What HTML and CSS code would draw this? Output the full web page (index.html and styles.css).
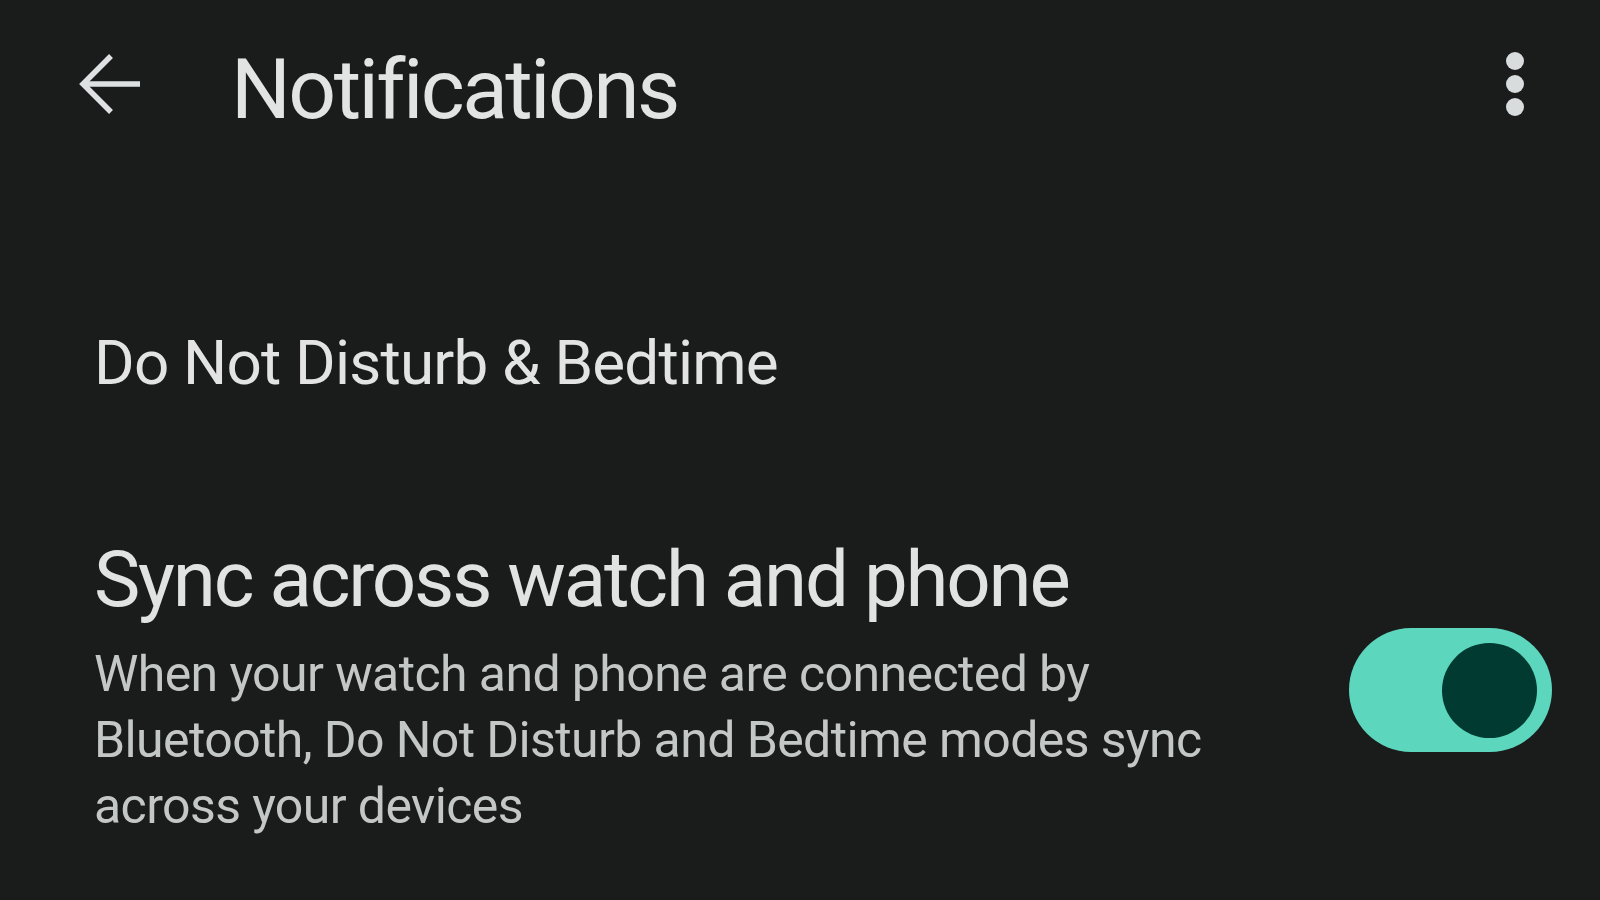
FILE: index.html
```html
<!DOCTYPE html>
<html lang="en">
<head>
<meta charset="utf-8">
<title>Notifications</title>
<link rel="stylesheet" href="styles.css">
</head>
<body>
<div class="screen">
  <header class="appbar">
    <button class="icon-btn back" aria-label="Back">
      <svg width="64" height="64" viewBox="0 0 64 64" aria-hidden="true">
        <path d="M61 32H6" stroke="currentColor" stroke-width="5.5" fill="none"/>
        <path d="M32 4L4 32L32 60" stroke="currentColor" stroke-width="5.5" fill="none" stroke-linejoin="miter"/>
      </svg>
    </button>
    <h1 class="title">Notifications</h1>
    <div class="spacer"></div>
    <button class="icon-btn more" aria-label="More options">
      <span class="dot"></span><span class="dot"></span><span class="dot"></span>
    </button>
  </header>
  <main class="list">
    <div class="item item-link">Do Not Disturb &amp; Bedtime</div>
    <div class="item item-switch">
      <div class="texts">
        <div class="item-title">Sync across watch and phone</div>
        <div class="item-summary">When your watch and phone are connected by Bluetooth, Do Not Disturb and Bedtime modes sync across your devices</div>
      </div>
      <div class="switch on" role="switch" aria-checked="true"><span class="thumb"></span></div>
    </div>
  </main>
</div>
</body>
</html>
```
FILE: styles.css
```css
html, body {
  margin: 0;
  padding: 0;
  background: #1a1c1c;
}
body {
  font-family: Roboto, "Noto Sans", "Liberation Sans", sans-serif;
  color: #e2e3e3;
}
.screen {
  width: 1600px;
  height: 900px;
  overflow: hidden;
  background: #1a1c1c;
}
.appbar {
  display: flex;
  align-items: center;
  height: 168px;
  padding: 0 76px 0 79px;
  box-sizing: border-box;
}
.icon-btn {
  background: none;
  border: 0;
  padding: 0;
  color: #dde1e1;
  display: flex;
  align-items: center;
  justify-content: center;
}
.back {
  width: 64px;
  height: 64px;
}
.back svg { display: block; }
.title {
  margin: 12px 0 0 88px;
  font-size: 84px;
  font-weight: 400;
  line-height: 1;
  color: #e2e3e3;
  letter-spacing: -2.6px;
}
.spacer { flex: 1; }
.more {
  flex-direction: column;
  gap: 5px;
  width: 18px;
}
.dot {
  width: 18px;
  height: 18px;
  border-radius: 50%;
  background: #d8dcdc;
}
.list {
  padding: 0 48px 0 94px;
}
.item-link {
  font-size: 62px;
  line-height: 1;
  margin-top: 164px;
  color: #e3e3e3;
  letter-spacing: -0.8px;
}
.item-switch {
  display: flex;
  align-items: center;
  margin-top: 147px;
}
.texts {
  flex: 1;
  max-width: 1160px;
}
.item-title {
  font-size: 78px;
  line-height: 1;
  color: #e1e3e3;
  letter-spacing: -2.2px;
}
.item-summary {
  font-size: 50px;
  line-height: 66px;
  color: #c3c7c6;
  margin-top: 22px;
  letter-spacing: -0.6px;
}
.switch {
  margin-left: auto;
  width: 203px;
  height: 124px;
  border-radius: 62px;
  background: #5cd6bd;
  display: flex;
  align-items: center;
  justify-content: flex-end;
  padding: 0 15px;
  box-sizing: border-box;
}
.thumb {
  width: 95px;
  height: 95px;
  border-radius: 50%;
  background: #013a30;
}
```
